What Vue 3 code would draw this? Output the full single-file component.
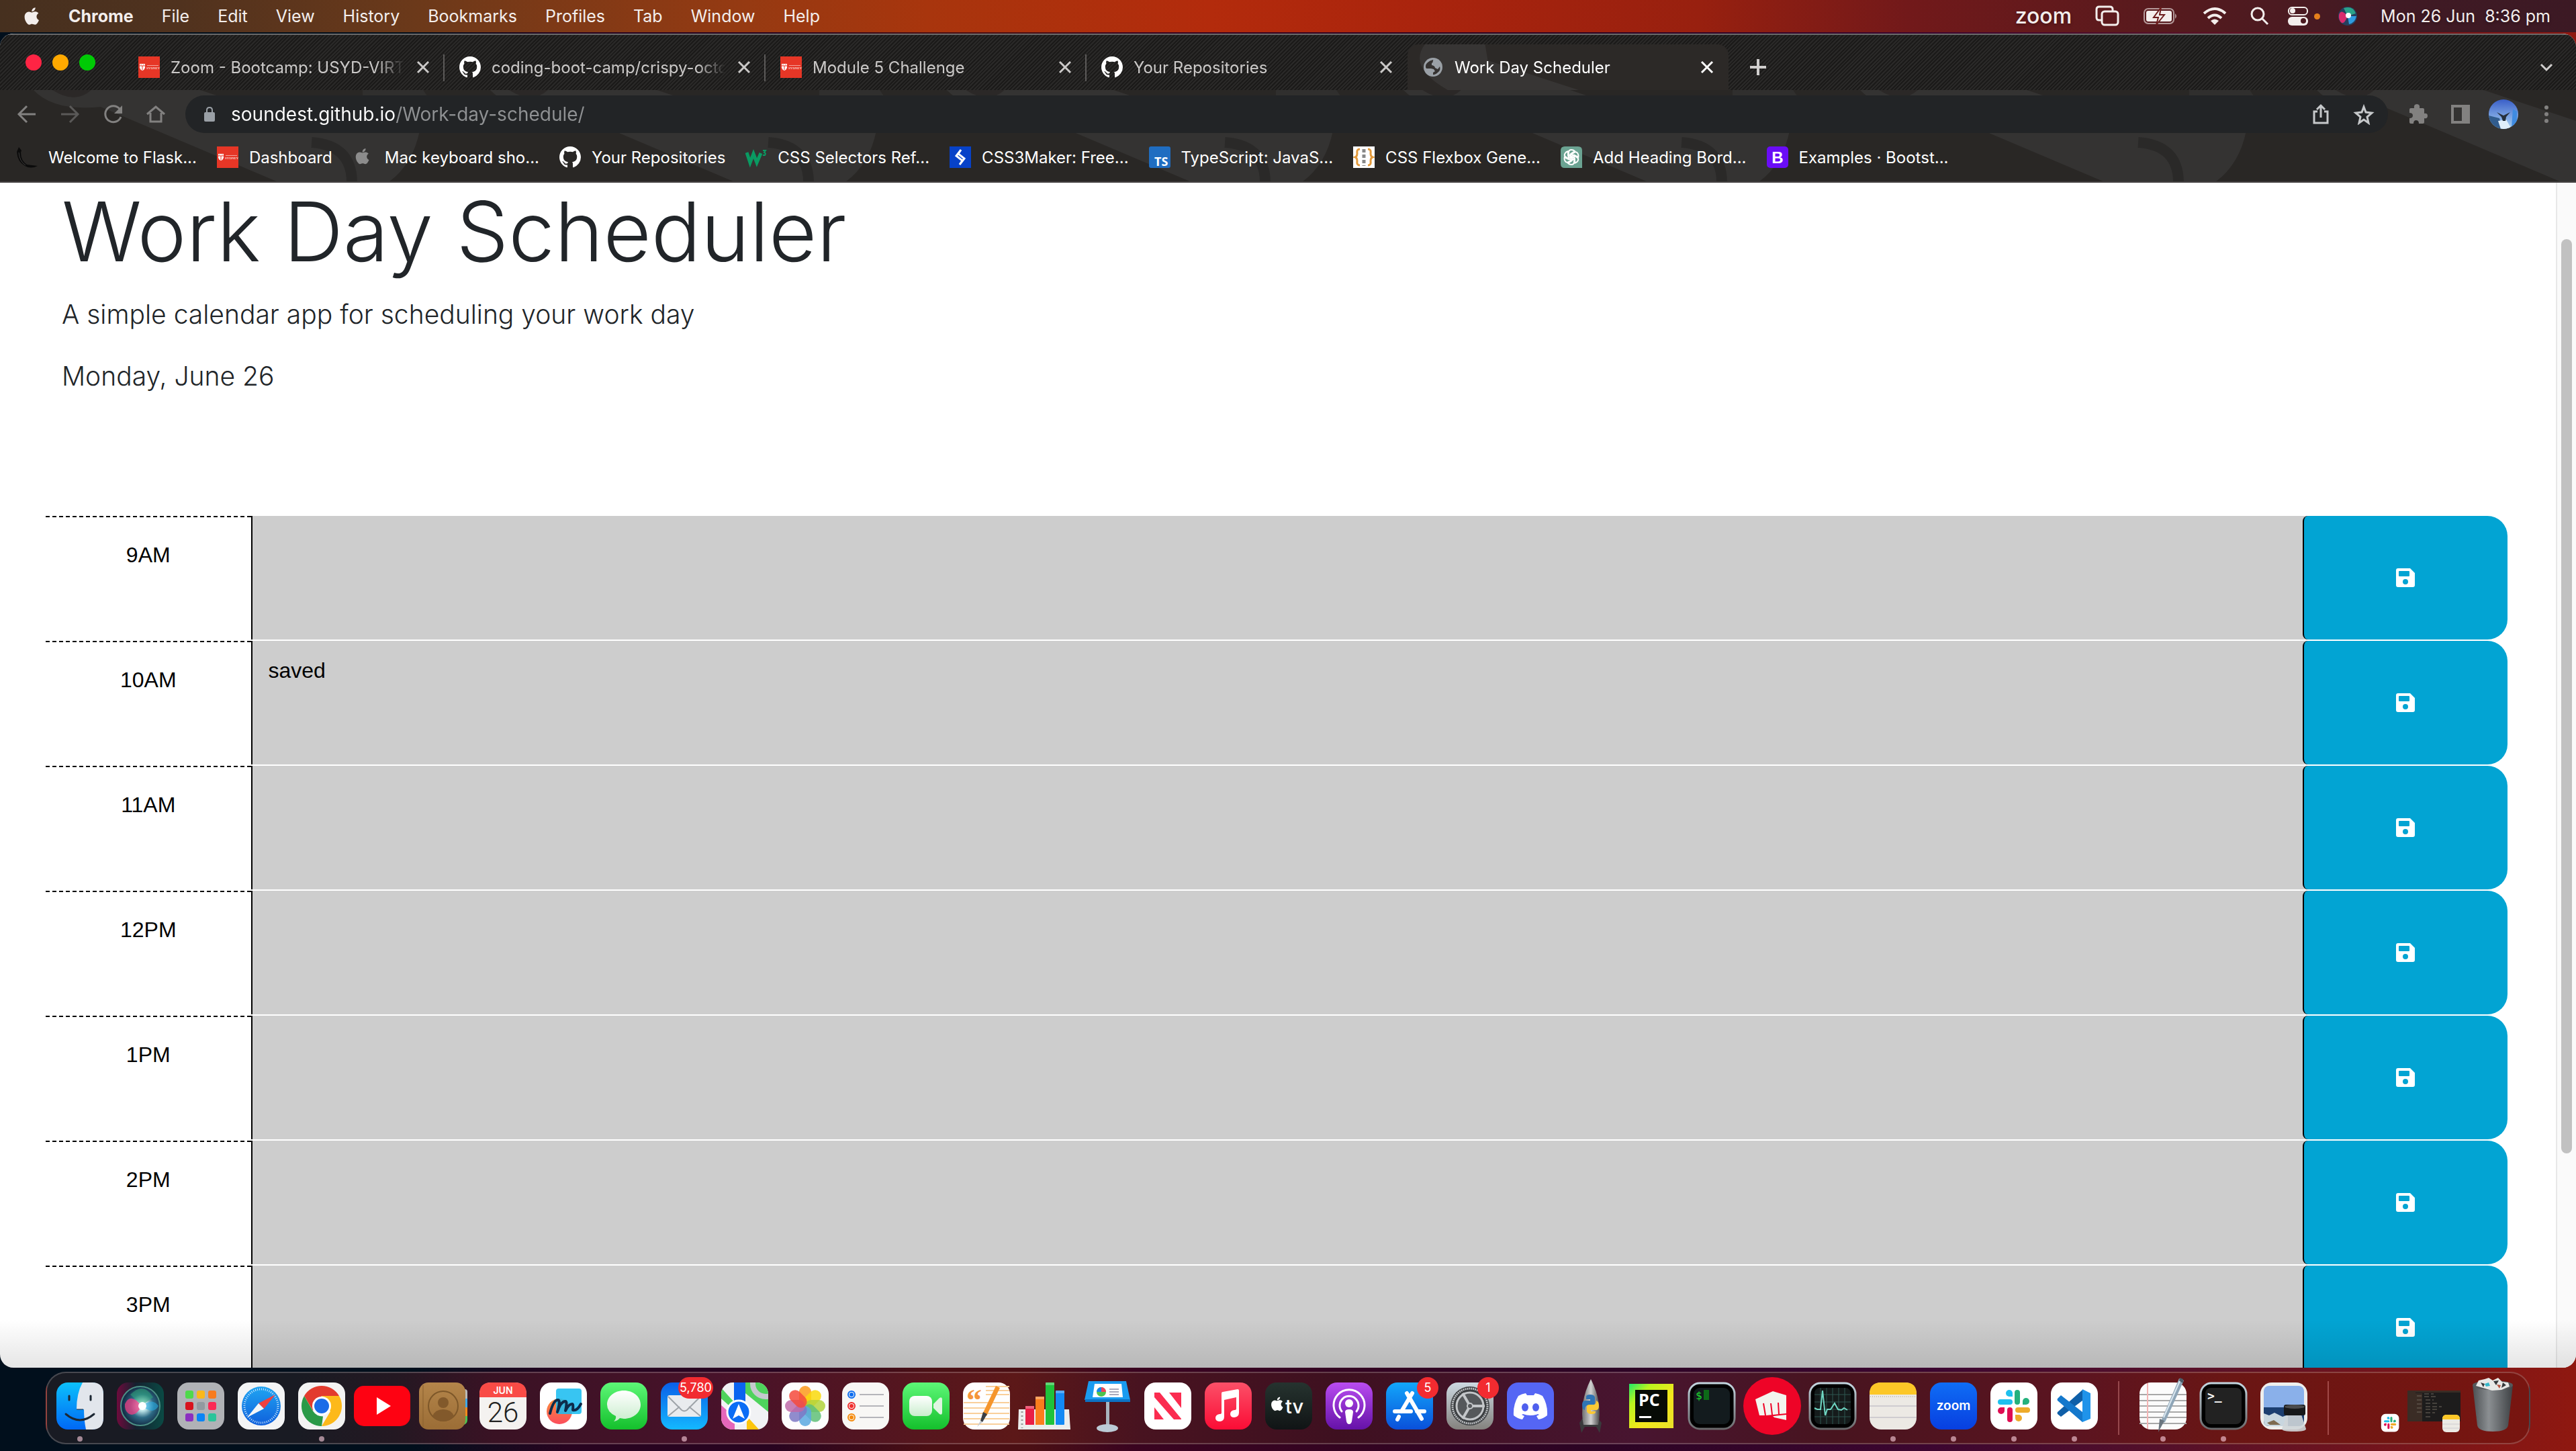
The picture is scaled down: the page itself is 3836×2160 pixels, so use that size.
<script setup>
import { ref } from 'vue'

const menus = ['File', 'Edit', 'View', 'History', 'Bookmarks', 'Profiles', 'Tab', 'Window', 'Help']

const github = '<path fill="#fff" transform="scale(2)" d="M8 0C3.58 0 0 3.58 0 8c0 3.54 2.29 6.53 5.47 7.59.4.07.55-.17.55-.38 0-.19-.01-.82-.01-1.49-2.01.37-2.53-.49-2.69-.94-.09-.23-.48-.94-.82-1.13-.28-.15-.68-.52-.01-.53.63-.01 1.08.58 1.23.82.72 1.21 1.87.87 2.33.66.07-.52.28-.87.51-1.07-1.78-.2-3.64-.89-3.64-3.95 0-.87.31-1.59.82-2.15-.08-.2-.36-1.02.08-2.12 0 0 .67-.21 2.2.82.64-.18 1.32-.27 2-.27s1.36.09 2 .27c1.53-1.04 2.2-.82 2.2-.82.44 1.1.16 1.92.08 2.12.51.56.82 1.27.82 2.15 0 3.07-1.87 3.75-3.65 3.95.29.25.54.73.54 1.48 0 1.07-.01 1.93-.01 2.2 0 .21.15.46.55.38A8.01 8.01 0 0 0 16 8c0-4.42-3.58-8-8-8z"/>'
const sydney = '<path fill="#e63626" d="M0 0h32v32H0z"/><path fill="#fff" d="M2 11h8v6q-1 3-4 4-3-1-4-4z"/><path stroke="#e63626" d="M2 14h8M6 14v6M4 12v1M8 12v1"/><path stroke="#f3a39b" d="M13 13.500h17"/><text x="12" y="19" font-family="Liberation Serif, serif" font-size="5" fill="#fff">SYDNEY</text>'
const apple = 'M17.050 20.280c-.98.95-2.050.8-3.080.35-1.090-.46-2.090-.48-3.240 0-1.440.62-2.200.44-3.060-.35C2.790 15.250 3.510 7.590 9.050 7.310c1.350.07 2.290.74 3.080.8 1.180-.24 2.310-.93 3.570-.84 1.510.12 2.650.72 3.400 1.800-3.120 1.870-2.380 5.980.48 7.130-.57 1.500-1.310 2.990-2.540 4.090zM12.030 7.250c-.15-2.230 1.660-4.070 3.740-4.250.29 2.580-2.340 4.500-3.740 4.250z'
const globe = '<circle cx="16" cy="16" r="14" fill="#9aa0a6"/><path fill="#353231" d="M8 9q3-3 8-4l1 3-3 2v3l4 1 1 3 4 2 3-4q2 5-3 9-4 4-7 3v-3l3-2-2-3-4-1H6q-3-5 2-9z"/><path fill="#9aa0a6" d="M16 6q6 0 9 6l-3 3h-4l-3-3z"/>'

const tabs = [
  { title: 'Zoom - Bootcamp: USYD-VIRT', icon: sydney },
  { title: 'coding-boot-camp/crispy-octo', icon: github },
  { title: 'Module 5 Challenge', icon: sydney },
  { title: 'Your Repositories', icon: github },
  { title: 'Work Day Scheduler', icon: globe, active: true },
]

const bookmarks = [
  { title: 'Welcome to Flask...', icon: '<path fill="#0b0b0b" d="M4 1l4 5-1 3q0 12 9 18l16 2q-10 5-19 0Q2 23 1 8z"/><path stroke="#3d3c3b" d="M4 9q1 13 10 19" fill="none"/>' },
  { title: 'Dashboard', icon: sydney },
  { title: 'Mac keyboard sho...', icon: `<path fill="#8c8c8c" transform="translate(-1 -1) scale(1.300)" d="${apple}"/>` },
  { title: 'Your Repositories', icon: github },
  { title: 'CSS Selectors Ref...', icon: '<path fill="none" stroke="#0a9a62" stroke-width="5" d="M2 9l5 15 5-13 5 13 6-14"/><path fill="none" stroke="#0a9a62" stroke-width="2" d="M26 6h4l-2 3q3 1 1 4l-3 0"/>' },
  { title: 'CSS3Maker: Free...', icon: '<path fill="#0742c8" d="M0 0h32v32H0z"/><path fill="none" stroke="#fff" stroke-width="3" d="M17 5l-7 9 9 7-4 6M15 27l7-9-9-7 4-6"/>' },
  { title: 'TypeScript: JavaS...', icon: '<rect width="32" height="32" rx="3" fill="#1f6dc1"/><text x="8" y="29" font-family="Open Sans, sans-serif" font-weight="700" font-size="18" fill="#fff">TS</text>' },
  { title: 'CSS Flexbox Gene...', icon: '<path fill="#fff" d="M0 0h32v32H0z"/><path fill="none" stroke="#e39a3c" stroke-width="3" d="M10 4Q5 4 6 10q0 5-3 6 3 1 3 6-1 6 4 6M22 4q5 0 4 6 0 5 3 6-3 1-3 6 1 6-4 6"/><path stroke="#888" stroke-width="5" stroke-dasharray="5 3" d="M16 4v25"/>' },
  { title: 'Add Heading Bord...', icon: '<path fill="#6ba392" d="M6 0h20q6 0 6 6v26H6q-6 0-6-6V6q0-6 6-6z"/><g fill="none" stroke="#fff" stroke-width="2"><path id="petal" d="M12 18V9q0-4 4-4 3 0 5 2l-6 4v6"/><use href="#petal" transform="rotate(60 16 16)"/><use href="#petal" transform="rotate(120 16 16)"/><use href="#petal" transform="rotate(180 16 16)"/><use href="#petal" transform="rotate(240 16 16)"/><use href="#petal" transform="rotate(300 16 16)"/></g>' },
  { title: 'Examples · Bootst...', icon: '<rect width="32" height="32" rx="5" fill="#6a0cf6"/><text x="16" y="25" text-anchor="middle" font-family="Liberation Sans, sans-serif" font-weight="700" font-size="24" fill="#fff">B</text>' },
]

const hours = ref([
  { label: '9AM', note: '' },
  { label: '10AM', note: 'saved' },
  { label: '11AM', note: '' },
  { label: '12PM', note: '' },
  { label: '1PM', note: '' },
  { label: '2PM', note: '' },
  { label: '3PM', note: '' },
])

const address = ref('soundest.github.io/Work-day-schedule/')

const grad = (id, from, to) => `<linearGradient id="${id}" x2="0" y2="1"><stop stop-color="${from}"/><stop offset="1" stop-color="${to}"/></linearGradient>`
const tile = (fill) => `<rect x="10" y="10" width="70" height="70" rx="17" fill="${fill}"/>`
const screenTile = '<rect x="11" y="11" width="68" height="68" rx="16" fill="#000" stroke="url(#steel)" stroke-width="3"/>'

const slackMark = '<g stroke-width="8" stroke-linecap="round"><path stroke="#25b17d" d="M50 25v14"/><path stroke="#1ec0ee" d="M25 39h14"/><path stroke="#df0d52" d="M39 51v14"/><path stroke="#eeab2a" d="M51 51h14"/></g><path fill="#1ec0ee" d="M43 31h-5a5 5 0 1 1 5-5z"/><path fill="#25b17d" d="M58 43v-5a5 5 0 1 1 5 5z"/><path fill="#df0d52" d="M31 47v5a5 5 0 1 1-5-5z"/><path fill="#eeab2a" d="M47 58h5a5 5 0 1 1-5 5z"/>'

const launchColors = ['#4fd94a', '#f9b81a', '#f77b1e', '#d8131d', '#929aa0', '#fb2b55', '#8b2fc0', '#0a84f5', '#2bc49a']
const launchpad = launchColors.map((c, i) => `<rect x="${22 + (i % 3) * 17}" y="${22 + Math.floor(i / 3) * 17}" width="12" height="12" rx="3" fill="${c}"/>`).join('')
const petalColors = ['#fb9a1c', '#f9d90c', '#b2d33c', '#5fbf78', '#5aa9e0', '#7d78c4', '#c06aa8', '#f44a3c']
const petals = petalColors.map((c, i) => `<rect x="36" y="15" width="18" height="30" rx="9" fill="${c}" opacity=".85" transform="rotate(${i * 45} 45 45)"/>`).join('')

const apps = [
  { name: 'Finder', running: true, art: grad('fin', '#0cc0fb', '#0068f5') + tile('url(#fin)') + '<path fill="#e2e6ec" d="M49 10h14q17 0 17 17v36q0 17-17 17h-9q-3-14-3-30H40q0-24 9-40z"/><path fill="none" stroke="#1c2733" stroke-width="3" stroke-linecap="round" d="M29 30v6M61 30v6M24 57q21 18 42 0"/><path fill="none" stroke="#1c2733" d="M40 50h10"/>' },
  { name: 'Siri', art: '<linearGradient id="sbg"><stop stop-color="#6d0b3c"/><stop offset=".4" stop-color="#15202f"/><stop offset="1" stop-color="#0a4a44"/></linearGradient><radialGradient id="orb" cx=".55" cy=".5"><stop stop-color="#fff"/><stop offset=".25" stop-color="#bfe6ea"/><stop offset=".6" stop-color="#2d6a85"/><stop offset="1" stop-color="#153049"/></radialGradient>' + tile('url(#sbg)') + '<circle cx="45" cy="45" r="29" fill="url(#orb)" stroke="#4c9086" stroke-width="2"/><path fill="#ef3c83" opacity=".75" d="M22 42q8-18 25 3-10 18-20 11-6-5-5-14z"/><path fill="#28a8e0" opacity=".6" d="M48 45q15-13 24 0-8 14-24 0z"/><path fill="#2fae77" opacity=".5" d="M30 28q20-20 34 4L47 44z"/><circle cx="48" cy="45" r="6" fill="#fff"/>' },
  { name: 'Launchpad', art: tile('#b0b2b6') + launchpad },
  { name: 'Safari', art: grad('saf', '#20a5f2', '#0f5fdc') + tile('#f3f4f5') + '<circle cx="45" cy="45" r="29" fill="url(#saf)"/><circle cx="45" cy="45" r="25" fill="none" stroke="#cfe7fb" stroke-width="3" stroke-dasharray="1 2"/><path fill="#f0413f" d="M66 28L49 49l-8-8z"/><path fill="#f4f6f8" d="M24 62l17-21 8 8z"/>' },
  { name: 'Google Chrome', running: true, art: tile('#f3f3f3') + '<path fill="#e33b2e" d="M45 30h26A30 30 0 0 0 19 30l13 22z"/><path fill="#2a9a48" d="M45 75A30 30 0 0 1 19 30l13 22.500q5 8 15 8z"/><path fill="#fdb91a" d="M45 30h26a30 30 0 0 1-26 45l13-22z"/><circle cx="45" cy="45" r="14" fill="#fff"/><circle cx="45" cy="45" r="11" fill="#1c6ce8"/>' },
  { name: 'YouTube', art: '<rect x="3" y="15" width="84" height="60" rx="15" fill="#fe0212"/><path fill="#fff" d="M37 32l21 13-21 13z"/>' },
  { name: 'Contacts', art: grad('con', '#b4854a', '#9b6d36') + '<rect x="70" y="20" width="12" height="18" rx="4" fill="#b9b9b9"/><path fill="#3fa9e8" d="M74 34h8v13h-8z"/><path fill="#f28a1d" d="M74 47h8v13h-8z"/><path fill="#4cc652" d="M74 60h8v6q0 6-8 8z"/><rect x="10" y="10" width="69" height="70" rx="14" fill="url(#con)"/><path stroke="#8a612f" d="M16 14v62"/><circle cx="46" cy="45" r="22" fill="none" stroke="#7d5729" stroke-width="2"/><circle cx="46" cy="40" r="8" fill="#82592b"/><path fill="#82592b" d="M30 60q4-10 16-10t16 10q-6 8-16 8t-16-8z"/>' },
  { name: 'Calendar', art: tile('#f4f2f0') + '<path fill="#f94b46" d="M10 32v-5q0-17 17-17h36q17 0 17 17v5z"/><text x="45" y="27" text-anchor="middle" font-family="Inter, sans-serif" font-weight="600" font-size="14" fill="#fff">JUN</text><text x="45" y="69" text-anchor="middle" font-family="Roboto, sans-serif" font-weight="300" font-size="42" fill="#222">26</text>' },
  { name: 'Freeform', art: grad('fre', '#fb8f3a', '#fb4d5c') + tile('#fff') + '<circle cx="39" cy="53" r="19" fill="url(#fre)"/><rect x="34" y="19" width="38" height="38" rx="4" fill="#1cbdf0" opacity=".88"/><path fill="none" stroke="#0d2b4a" stroke-width="4" stroke-linecap="round" stroke-linejoin="round" d="M25 56q5-20 12-20 4 0-1 18 5-16 12-16 3 0 0 14 5-10 10-10 2 0 1 9 6 2 12-9"/>' },
  { name: 'Messages', art: grad('grn', '#5df777', '#14c02c') + grad('bub', '#ffffff', '#c9edcd') + tile('url(#grn)') + '<path fill="url(#bub)" d="M45 22c14 0 25 9 25 21s-11 21-25 21l-6-1q-3 4-9 5 4-4 3-8-13-6-13-17c0-12 11-21 25-21z"/>' },
  { name: 'Mail', running: true, badge: '5,780', art: grad('mai', '#0a5fe8', '#14b8ff') + tile('url(#mai)') + '<rect x="20" y="29" width="50" height="32" rx="3" fill="#e9ebee"/><path fill="none" stroke="#9ea3a8" stroke-width="2" d="M21 31l20 20q4 3 8 0l20-20M21 60l17-14M69 60L52 46"/>' },
  { name: 'Maps', art: '<clipPath id="mapc"><rect x="10" y="10" width="70" height="70" rx="17"/></clipPath><g clip-path="url(#mapc)"><path fill="#f1f2f4" d="M0 0h90v90H0z"/><path fill="#4fd35c" d="M46 0h44v62L46 26zM10 18l18 20v12L10 34z"/><path fill="#e567ba" d="M8 42l22 20v20H8z"/><path fill="#fdc50c" d="M48 82V60l20 22z"/><path fill="#0a63f0" d="M29 8h17v34H29z"/><circle cx="76" cy="12" r="19" fill="none" stroke="#c6c9ce" stroke-width="8"/></g><circle cx="36" cy="54" r="17" fill="#0c6df5" stroke="#fff" stroke-width="3"/><path fill="#fff" d="M36 42l9 22-9-5-9 5z"/>' },
  { name: 'Photos', art: tile('#fdfdfd') + petals },
  { name: 'Reminders', art: tile('#f8f7f5') + '<path stroke="#b5b5ba" stroke-width="2" d="M36 28h36M36 45h36M36 62h36"/><g fill="none" stroke-width="2"><circle cx="24" cy="28" r="5" stroke="#0a6cf0"/><circle cx="24" cy="45" r="5" stroke="#f02c2c"/><circle cx="24" cy="62" r="5" stroke="#f58a0b"/></g><circle cx="24" cy="28" r="3" fill="#0a6cf0"/><circle cx="24" cy="45" r="3" fill="#f02c2c"/><circle cx="24" cy="62" r="3" fill="#f58a0b"/>' },
  { name: 'FaceTime', art: tile('url(#grn)') + '<rect x="20" y="30" width="34" height="30" rx="8" fill="url(#bub)"/><path fill="#dff5e1" d="M56 42l9-9q4-2 4 2v20q0 4-4 2l-9-9z"/>' },
  { name: 'Pages', art: tile('#fefefe') + '<path stroke="#f9cf9a" stroke-width="2" d="M44 16h35M44 22h35M44 28h35M11 40h68M11 48h68M11 56h68M11 64h68M11 72h68"/><text x="15" y="52" font-family="Liberation Serif, serif" font-weight="700" font-size="46" fill="#f5953a">“</text><path fill="#f5952b" d="M59 15l6 3-20 42-6-3z"/><path fill="#3c3f44" d="M40 54l6 3-7 12-3-2z"/><path fill="#c9ccd0" d="M36 67l3 2-8 7z"/>' },
  { name: 'Numbers', art: '<path fill="#eceded" d="M3 50h75l2 30H2z"/><path stroke="#999" stroke-width="3" stroke-dasharray="2 4" d="M8 53v25"/><rect x="13" y="45" width="13" height="28" fill="#e91e46"/><rect x="28" y="31" width="13" height="42" fill="#fb7d1d"/><rect x="43" y="10" width="13" height="63" rx="1" fill="#1fc23b"/><rect x="58" y="22" width="13" height="51" rx="1" fill="#1389f5"/><path fill="#fff" opacity=".3" d="M13 45h13v4H13zM28 31h13v4H28zM43 10h13v4H43zM58 22h13v4H58z"/>' },
  { name: 'Keynote', art: '<path fill="#a8b4be" d="M43 38h5v38h-5z"/><ellipse cx="45" cy="78" rx="16" ry="6" fill="#bccbd6"/><path fill="#1a9bf0" d="M17 8h56l6 28H11z"/><path fill="#0c72c4" d="M12 35h67v4H12z"/><path fill="#fff" d="M26 12h40l2 20H23z"/><circle cx="36" cy="24" r="7" fill="#4dc34f"/><path fill="#f0435a" d="M36 24v-7a7 7 0 0 1 7 7z"/><path fill="#1787f0" d="M36 24h-7a7 7 0 0 1 7-7z"/><path stroke="#aab" stroke-width="2" d="M48 20h14M48 24h14M48 28h14"/>' },
  { name: 'News', art: tile('#fff') + '<path fill="#fb2c50" d="M25 25h8l32 39v1H54L25 32zM47 25h18v23zM25 47v18h14z"/>' },
  { name: 'Music', art: grad('mus', '#fb5068', '#fb0c35') + tile('url(#mus)') + '<path fill="#fff" d="M35 26q0-2 2-2l22-4q2 0 2 2v33q0 6-7 7-6 0-6-5 0-5 6-6 3 0 3-2V32l-18 4v25q0 6-6 7-7 0-7-5t6-6q3 0 3-2z"/>' },
  { name: 'Apple TV', art: grad('atv', '#26332f', '#101415') + tile('url(#atv)') + `<path fill="#fff" transform="translate(14 28) scale(1.150)" d="${apple}"/><text x="40" y="56" font-family="Inter, sans-serif" font-weight="500" font-size="29" fill="#fff">tv</text>` },
  { name: 'Podcasts', art: grad('pod', '#b94cf0', '#6512a8') + tile('url(#pod)') + '<g fill="none" stroke="#fff" stroke-width="3" stroke-linecap="round"><path d="M31 62a23 23 0 1 1 28 0"/><path d="M34 53a14 14 0 1 1 22 0"/></g><circle cx="45" cy="41" r="6" fill="#fff"/><path fill="#fff" d="M39 54q0-4 6-4t6 4l-2 14q-1 4-4 4t-4-4z"/>' },
  { name: 'App Store', badge: '5', art: grad('aps', '#12a6fa', '#0a50da') + tile('url(#aps)') + '<path stroke="#fff" stroke-width="6" stroke-linecap="round" d="M49 26L33 53M41 26l22 38M23 53h24M56 53h11M29 61l-2 4"/>' },
  { name: 'System Settings', badge: '1', art: grad('set', '#cdd9e2', '#84827e') + tile('url(#set)') + '<circle cx="45" cy="45" r="29" fill="#3c3f42"/><circle cx="45" cy="45" r="26" fill="none" stroke="#b9bcbf" stroke-width="3" stroke-dasharray="2 1"/><circle cx="45" cy="45" r="20" fill="#55585b" stroke="#c3c6c9" stroke-width="3"/><path stroke="#c3c6c9" stroke-width="4" d="M45 45h22M45 45L34 26M45 45L34 64"/><circle cx="45" cy="45" r="4" fill="#55585b" stroke="#c3c6c9" stroke-width="2"/>' },
  { name: 'Discord', art: tile('#5566f4') + '<path fill="#fff" d="M38 26l2 3h10l2-3q6 1 11 4 8 13 7 29-6 5-13 6l-3-5 4-2-2-1q-11 4-22 0l-2 1 4 2-3 5q-7-1-13-6-1-16 7-29 5-3 11-4z"/><ellipse cx="37" cy="47" rx="5" ry="6" fill="#5060ee"/><ellipse cx="53" cy="47" rx="5" ry="6" fill="#5060ee"/>' },
  { name: 'Python Launcher', art: '<linearGradient id="rkt"><stop stop-color="#6e6e6e"/><stop offset=".5" stop-color="#d2d2d2"/><stop offset="1" stop-color="#4a4a4a"/></linearGradient><path fill="#3a3a3c" d="M32 64l-4 6 3 15 5-9h17l5 9 3-15-5-6z"/><path fill="url(#rkt)" d="M45 5q18 36 11 68H34Q27 41 45 5z"/><path fill="#2f74b5" d="M38 31q0-3 6-3t7 4v9q0 3-4 3h-7q-4 1-4 7-4-1-4-8t6-6h6v-2h-6z"/><path fill="#fbc935" d="M52 54q0 3-6 3t-7-4v-7q0-3 4-3h6q4 0 4-6 4 1 4 8t-6 6h-6v2h7z"/>' },
  { name: 'PyCharm', art: '<linearGradient id="pyc" y2="1"><stop stop-color="#1fe86a"/><stop offset=".25" stop-color="#b9f51e"/><stop offset=".6" stop-color="#f3e61c"/><stop offset="1" stop-color="#e8e12a"/></linearGradient><rect x="12" y="12" width="66" height="66" fill="url(#pyc)"/><rect x="21" y="21" width="48" height="48" fill="#070b06"/><text x="26" y="45" font-family="Open Sans, sans-serif" font-weight="700" font-size="25" fill="#fff">PC</text><path fill="#fff" d="M27 60h18v3H27z"/>' },
  { name: 'iTerm', art: grad('steel', '#c3d5df', '#6a6a6c') + screenTile + '<rect x="18" y="18" width="54" height="54" rx="9" fill="#131b1e"/><text x="21" y="35" font-family="DejaVu Sans Mono, monospace" font-size="16" fill="#1fdc2e">$</text><path fill="#0d6a18" d="M33 21h8v15h-8z"/>' },
  { name: 'Bloons', art: '<circle cx="45" cy="45" r="43" fill="#ee0427"/><path fill="#f3f4ee" d="M20 35l26-12 20 6v28l-4 2H26zM46 60l20-4v10l-18-4z"/><path stroke="#ee0427" stroke-width="2" d="M32 41l3 18M43 41l2 17M54 40l1 17"/><path stroke="#ee0427" stroke-width="2" d="M26 61l40-4"/>' },
  { name: 'Activity Monitor', art: screenTile + '<rect x="18" y="18" width="54" height="54" rx="8" fill="#151b1b"/><path stroke="#2f5751" d="M18 28h54M18 39h54M18 50h54M18 61h54M27 18v54M36 18v54M45 18v54M54 18v54M63 18v54"/><path fill="none" stroke="#6fd6c2" stroke-width="2" d="M18 48l4 2h5l3-28 4 37 3-9h5l6-9 5 9 5 1 4-3 5 3"/>' },
  { name: 'Notes', running: true, art: tile('#ece9e4') + '<path fill="#fcc727" d="M10 28v-1q0-17 17-17h36q17 0 17 17v1z"/><path stroke="#a39c8c" stroke-dasharray="1 2" d="M11 31h68"/><path stroke="#cfccd0" stroke-width="2" d="M10 45h70M10 62h70"/>' },
  { name: 'Zoom', running: true, art: grad('zm', '#0f6df5', '#083fe0') + tile('url(#zm)') + '<text x="45" y="51" text-anchor="middle" font-family="Inter, sans-serif" font-weight="600" font-size="19" fill="#fff">zoom</text>' },
  { name: 'Slack', running: true, art: tile('#fff') + slackMark },
  { name: 'Visual Studio Code', running: true, art: tile('#fff') + '<path fill="#0f5fa8" d="M57 21v16L25 61l-5-4q-1-2 0-3z"/><path fill="#1478cc" d="M20 34l5-5 32 25v15L20 37q-1-1 0-3z"/><path fill="#1f93ea" d="M57 20l12 6v38l-12 5z"/>' },
]

const utilities = [
  { name: 'TextEdit', running: true, art: tile('#fbfbfb') + '<path stroke="#a8a8a8" stroke-width="2" d="M10 28h70M10 37h70M10 45h70M10 54h70M10 62h70M10 71h70"/><path stroke="#f3b3b3" stroke-width="2" d="M22 11v68"/><path fill="#8fa6b8" d="M69 4l7 3-28 62-8 3z"/><path fill="#4b5a66" d="M70 3l5 2 0 6-6-3z"/><path fill="#6b7680" d="M40 64l7 3-9 17z"/><path stroke="#d9e6ef" stroke-width="2" d="M70 8L46 62"/>' },
  { name: 'Terminal', running: true, art: screenTile + '<rect x="18" y="18" width="54" height="54" rx="8" fill="#222"/><text x="21" y="36" font-family="DejaVu Sans Mono, monospace" font-weight="700" font-size="18" fill="#fff">&gt;_</text>' },
  { name: 'Preview', art: tile('#efeeec') + '<rect x="15" y="15" width="60" height="60" rx="8" fill="#8ab0ea"/><path fill="#1c3e70" d="M15 47h60v20q0 8-8 8H23q-8 0-8-8z"/><path fill="#c8d6df" d="M15 56l8 3 8-4 12 6 8-3v17H23q-8 0-8-8z"/><path fill="#7e6b50" d="M20 70l10-4 10 7H24z"/><path fill="#cfd5d8" opacity=".9" d="M49 58h22l7 21q0 4-18 4t-18-4z"/><rect x="45" y="43" width="32" height="16" rx="3" fill="#17181a"/><ellipse cx="61" cy="46" rx="15" ry="3" fill="#4a4b4d"/>' },
]
</script>

<template>
  <div class="desktop">
    <header class="menubar">
      <nav class="menus" aria-label="Menu bar">
        <button class="apple" aria-label="Apple menu">
          <svg viewBox="4 2 17 20" width="24" height="32"><path fill="currentColor" :d="apple" /></svg>
        </button>
        <button class="current">Chrome</button>
        <button v-for="item in menus" :key="item">{{ item }}</button>
      </nav>
      <div class="status">
        <span class="zoom-mark">zoom</span>
        <svg width="36" height="32" viewBox="0 0 36 32" fill="none" stroke="currentColor" stroke-width="3"><path d="M10 22H6q-4 0-4-4V6q0-4 4-4h16q4 0 4 4v2" /><rect x="10" y="9" width="24" height="20" rx="4" /></svg>
        <svg width="54" height="32" viewBox="0 0 54 32"><rect x="2" y="5" width="44" height="22" rx="6" fill="none" stroke="currentColor" stroke-width="2" opacity=".6" /><rect x="5" y="8" width="38" height="16" rx="3" fill="currentColor" /><path fill="currentColor" opacity=".6" d="M48 12q4 4 0 8z" /><path fill="currentColor" stroke="#6c1c1c" stroke-width="2" d="M27 3L16 18h7l-3 11 12-15h-7z" /></svg>
        <svg width="36" height="28" viewBox="0 0 36 28" fill="none" stroke="currentColor" stroke-width="4"><path d="M2 10q16-14 32 0M8 17q10-9 20 0" /><path fill="currentColor" stroke="none" d="M12 21q6-5 12 0l-6 6z" /></svg>
        <svg width="28" height="28" viewBox="0 0 28 28" fill="none" stroke="currentColor" stroke-width="3"><circle cx="11" cy="11" r="9" /><path d="M18 18l8 8" /></svg>
        <span class="control-centre">
          <svg width="32" height="30" viewBox="0 0 32 30"><rect x="2" y="2" width="28" height="11" rx="5" fill="none" stroke="currentColor" stroke-width="2" /><circle cx="8" cy="7" r="4" fill="currentColor" /><rect x="1" y="16" width="30" height="13" rx="6" fill="currentColor" /><circle cx="24" cy="22" r="4" fill="#4a191f" /></svg>
          <i class="mic-dot"></i>
        </span>
        <svg width="28" height="28" viewBox="0 0 28 28"><circle cx="14" cy="14" r="14" fill="#25405e" /><path fill="#d82c6d" d="M1 12q3-10 13 2-5 12-9 10-5-4-4-12z" /><path fill="#2ba38a" d="M8 2q14-4 18 8l-12 4z" /><path fill="#2f9be0" d="M14 14h13q-2 10-11 12z" /><circle cx="15" cy="13" r="4" fill="#fff" /></svg>
        <time>Mon 26 Jun&nbsp; 8:36 pm</time>
      </div>
    </header>

    <main class="window">
      <div class="chrome">
        <svg class="theme" aria-hidden="true">
          <defs>
            <pattern id="theme" width="680" height="204" patternUnits="userSpaceOnUse">
              <path fill="#292725" d="M0 0h680v204H0z" />
              <path fill="#343332" d="M50 68h248l180 60h147q-10 50-45 76H412L150 93Q80 100 50 68z" />
              <path fill="#2b2827" d="M78 68h58q-24 22-58 0z" />
              <path fill="none" stroke="#2a2928" stroke-width="16" d="M464 146q60 4 60 60" />
              <path fill="#302f2e" d="M540 68h90l20 30-30 34h-80z" />
            </pattern>
          </defs>
          <rect width="100%" height="100%" fill="url(#theme)" />
        </svg>

        <div class="tabstrip">
          <div class="lights">
            <button class="light close" aria-label="Close window"></button>
            <button class="light minimise" aria-label="Minimise window"></button>
            <button class="light full" aria-label="Full screen"></button>
          </div>
          <div class="tabs">
            <div v-for="tab in tabs" :key="tab.title" class="tab" :class="{ active: tab.active }">
              <svg v-if="tab.active" class="tab-theme" viewBox="0 0 480 68" preserveAspectRatio="none" aria-hidden="true"><path fill="#373534" d="M26 0h90l4 24 136 44H60Q0 34 26 0z" /></svg>
              <svg class="favicon" viewBox="0 0 32 32" v-html="tab.icon"></svg>
              <span class="tab-title">{{ tab.title }}</span>
              <button class="tab-close" :aria-label="'Close ' + tab.title">
                <svg viewBox="0 0 24 24" width="24" height="24"><path stroke="currentColor" stroke-width="3" d="M4 4l16 16M20 4L4 20" /></svg>
              </button>
            </div>
          </div>
          <button class="strip-button" aria-label="New tab"><svg viewBox="0 0 28 28" width="28" height="28"><path stroke="currentColor" stroke-width="4" d="M14 2v24M2 14h24" /></svg></button>
          <button class="strip-button last" aria-label="Search tabs"><svg viewBox="0 0 28 28" width="28" height="28"><path fill="none" stroke="currentColor" stroke-width="3" d="M6 10l8 8 8-8" /></svg></button>
        </div>

        <div class="toolbar">
          <div class="nav">
            <button aria-label="Back"><svg viewBox="0 0 32 32"><path d="M29 16H5M16 4L4 16l12 12" /></svg></button>
            <button aria-label="Forward" class="dim"><svg viewBox="0 0 32 32"><path d="M3 16h24M16 4l12 12-12 12" /></svg></button>
            <button aria-label="Reload"><svg viewBox="0 0 32 32"><path d="M26 8a12 12 0 1 0 2 12" /><path fill="currentColor" stroke="none" d="M30 3v12H18z" /></svg></button>
            <button aria-label="Home"><svg viewBox="0 0 32 32"><path d="M3 16L16 5l13 11M8 14v13h16V14" /></svg></button>
          </div>
          <div class="omnibox">
            <svg width="24" height="28" viewBox="0 0 24 28"><rect x="4" y="11" width="16" height="14" rx="2" fill="#9aa0a6" /><path fill="none" stroke="#9aa0a6" stroke-width="2" d="M8 12V8q0-4 4-4t4 4v4" /></svg>
            <input v-model="address" type="text" aria-label="Address and search bar" />
            <button aria-label="Share"><svg viewBox="0 0 32 32"><path d="M11 12H6v17h20V12h-5M16 21V4M10 9l6-6 6 6" /></svg></button>
            <button aria-label="Bookmark this tab"><svg viewBox="0 0 32 32"><path d="M16 5l3 8 9 1-7 6 2 9-7-5-7 5 2-9-7-6 9-1z" /></svg></button>
          </div>
          <div class="nav extras">
            <button aria-label="Extensions"><svg viewBox="0 0 32 32"><path fill="currentColor" stroke="none" d="M4 9q0-2 2-2h5q-1-6 4-6t4 6h5q2 0 2 2v6q5-1 5 3.500t-5 3.500v6q0 2-2 2h-6q0-5-4-5t-4 5H6q-2 0-2-2v-6q5 0 5-4t-5-4z" /></svg></button>
            <button aria-label="Side panel"><svg viewBox="0 0 32 32"><path fill="currentColor" stroke="none" fill-rule="evenodd" d="M2 2h28v28H2zM6 6v20h12V6z" /></svg></button>
            <button aria-label="Profile" class="avatar"><svg viewBox="0 0 44 44"><defs><linearGradient id="sky" x2="0" y2="1"><stop stop-color="#3a5fc8" /><stop offset="1" stop-color="#a8d4f5" /></linearGradient><clipPath id="round"><circle cx="22" cy="22" r="22" /></clipPath></defs><g clip-path="url(#round)" stroke="none"><path fill="url(#sky)" d="M0 0h44v44H0z" /><path fill="#315c8d" d="M0 24l16 4 4 16H0z" /><path fill="#dfeefa" d="M14 32l12-2 8 14H18z" /><path fill="#3f8be0" d="M36 14l6 4v24h-8z" /><path fill="#26303c" d="M12 19l10 5 10-5-6 7-1 6h-4l-2-6z" /></g></svg></button>
            <button aria-label="Menu"><svg viewBox="0 0 32 32"><g fill="currentColor" stroke="none"><circle cx="16" cy="6" r="3" /><circle cx="16" cy="16" r="3" /><circle cx="16" cy="26" r="3" /></g></svg></button>
          </div>
        </div>

        <nav class="bookmarks" aria-label="Bookmarks">
          <a v-for="mark in bookmarks" :key="mark.title" href="#">
            <svg class="favicon" viewBox="0 0 32 32" v-html="mark.icon"></svg>{{ mark.title }}
          </a>
        </nav>
      </div>

      <div class="viewport">
        <section class="page">
          <header class="jumbotron">
            <h1>Work Day Scheduler</h1>
            <p>A simple calendar app for scheduling your work day</p>
            <p>Monday, June 26</p>
          </header>
          <form class="schedule" @submit.prevent>
            <div v-for="(hour, i) in hours" :key="hour.label" class="block">
              <label class="hour" :for="'hour-' + i">{{ hour.label }}</label>
              <textarea :id="'hour-' + i" v-model="hour.note"></textarea>
              <button class="save" :aria-label="'Save ' + hour.label">
                <svg viewBox="0 0 28 28" width="28" height="28"><path fill="currentColor" fill-rule="evenodd" d="M3 0h18l7 7v18q0 3-3 3H3q-3 0-3-3V3q0-3 3-3zM5 4q-1 0-1 1v6q0 1 1 1h14q1 0 1-1V5q0-1-1-1zM14 16a4 4 0 1 0 0 8 4 4 0 0 0 0-8z" /></svg>
              </button>
            </div>
          </form>
        </section>
        <div class="scrollbar"><div class="thumb"></div></div>
      </div>
    </main>

    <footer class="dock">
      <button v-for="app in apps" :key="app.name" class="app" :aria-label="app.name">
        <svg viewBox="0 0 90 90" v-html="app.art"></svg>
        <i v-if="app.running" class="running"></i>
        <span v-if="app.badge" class="badge" :class="{ wide: app.badge.length > 1 }">{{ app.badge }}</span>
      </button>
      <hr />
      <button v-for="app in utilities" :key="app.name" class="app" :aria-label="app.name">
        <svg viewBox="0 0 90 90" v-html="app.art"></svg>
        <i v-if="app.running" class="running"></i>
      </button>
      <hr />
      <button class="app minimised" aria-label="Minimised windows">
        <svg viewBox="0 0 144 90">
          <g transform="translate(19 53) scale(.38)"><rect x="10" y="10" width="70" height="70" rx="17" fill="#fff" /><g v-html="slackMark"></g></g>
          <path fill="#1d1c1c" d="M62 22h79v46H62z" />
          <path fill="#3a2c25" d="M62 22h12v46H62zM74 26h10v42H74zM62 22h79v3H62z" />
          <path stroke="#71695f" stroke-dasharray="7 3" d="M76 30h7M76 36h7M76 42h7M76 48h7M76 54h7M87 27h14M87 31h18M89 36h12M89 41h20M89 46h24M89 50h20M89 55h14M89 61h10" />
          <rect x="114" y="58" width="26" height="26" rx="6" fill="#eceae5" />
          <path fill="#fcc727" d="M114 65v-1q0-6 6-6h14q6 0 6 6v1z" />
          <path stroke="#cfccd0" d="M114 72h26M114 78h26" />
        </svg>
      </button>
      <button class="app" aria-label="Bin">
        <svg viewBox="0 0 90 90">
          <defs><linearGradient id="bin"><stop stop-color="#4b4f52" /><stop offset=".4" stop-color="#8b8f92" /><stop offset="1" stop-color="#3e4144" /></linearGradient></defs>
          <path fill="url(#bin)" d="M15 14h60l-7 60q-2 9-23 9t-23-9z" />
          <ellipse cx="45" cy="14" rx="30" ry="7" fill="#55595c" />
          <path fill="#e8e8e6" d="M20 15l4-8 9-2 6-2 6 4 8-4 6 6 9 1 2 6-12 5-14 1z" />
          <path fill="#35383b" d="M27 10l6 2-2 5zM46 8l4 6 4-7zM60 10l5 4-7 4z" />
          <path fill="#35b7c9" d="M33 12l6-2 2 5-6 1z" /><path fill="#b5503c" d="M51 13l6 1-2 5z" />
        </svg>
      </button>
    </footer>
  </div>
</template>

<style>
body {
  margin: 0;
  background: #000;
}
</style>

<style scoped>
.desktop {
  display: flex;
  flex-direction: column;
  height: 100vh;
  overflow: hidden;
  font-family: Inter, "Noto Sans", sans-serif;
  background: linear-gradient(90deg, #010f1c 0 16%, #280420 22% 30%, #4a0f14 36% 40%, #3a0420 44%, #2c0424 62%, #3c0630 75%, #54102a 84%, #8f1810);
}

button {
  padding: 0;
  border: 0;
  background: none;
  color: inherit;
  font: inherit;
}

svg {
  display: block;
  flex: none;
}

/* Menu bar */
.menubar {
  display: flex;
  justify-content: space-between;
  align-items: center;
  flex: none;
  height: 48px;
  margin-bottom: 2px;
  padding: 0 38px 0 36px;
  background: linear-gradient(90deg, #46301f 0, #50321e 7%, #6b391a 16%, #963a12 29%, #a8350d 36%, #b32b0c 47%, #aa240d 55%, #98200f 66%, #72191a 74%, #541a1e 85%, #401a24 93%, #3c1924);
  color: #f3eeec;
  font-size: 25px;
  text-shadow: 0 2px 4px rgba(0, 0, 0, 0.3);
}

.menus,
.status {
  display: flex;
  align-items: center;
}

.menus {
  gap: 42px;
}

.current {
  font-weight: 700;
}

.status {
  gap: 35px;
}

.zoom-mark {
  font-size: 32px;
  line-height: 40px;
  font-weight: 500;
}

.control-centre {
  display: flex;
  align-items: center;
  gap: 8px;
  margin: 0 -8px;
}

.mic-dot {
  width: 9px;
  height: 9px;
  border-radius: 50%;
  background: #e5801c;
}

/* Browser window */
.window {
  display: flex;
  flex: 1;
  flex-direction: column;
  min-height: 0;
  overflow: hidden;
  border-radius: 20px;
  background: #fff;
}

.chrome {
  position: relative;
  flex: none;
  border-bottom: 2px solid #454242;
  color: #fff;
}

.theme {
  position: absolute;
  top: 16px;
  left: 0;
  width: 100%;
  height: 204px;
}

.tabstrip,
.toolbar,
.bookmarks {
  position: relative;
}

.tabstrip {
  display: flex;
  align-items: flex-end;
  height: 82px;
  border-top: 2px solid #6a6969;
  background: repeating-linear-gradient(135deg, #1b1a19 0 2px, #2a2928 2px 4px);
  font-size: 24px;
}

.lights {
  display: flex;
  align-self: center;
  gap: 16px;
  padding: 0 42px 0 38px;
}

.light {
  width: 24px;
  height: 24px;
  border-radius: 50%;
}

.close {
  background: #ff2444;
}

.minimise {
  background: #ffa900;
}

.full {
  background: #00ca05;
}

.tabs {
  display: flex;
}

.tab {
  position: relative;
  display: flex;
  align-items: center;
  gap: 16px;
  box-sizing: border-box;
  width: 478px;
  height: 68px;
  padding: 0 20px 0 22px;
  color: #cbc9c8;
}

.tab:not(.active)::after {
  position: absolute;
  top: 15px;
  right: 0;
  width: 2px;
  height: 40px;
  background: #5c5a59;
  content: "";
}

.tab:nth-child(4)::after {
  display: none;
}

.active {
  border-radius: 16px 16px 0 0;
  background: #2c2927;
  color: #fff;
}

.tab-theme {
  position: absolute;
  inset: 0;
  width: 100%;
  height: 100%;
}

.favicon {
  position: relative;
  width: 32px;
  height: 32px;
}

.tab-title {
  position: relative;
  flex: 1;
  overflow: hidden;
  white-space: nowrap;
  mask-image: linear-gradient(90deg, #000 88%, transparent);
}

.tab-close {
  position: relative;
}

.strip-button {
  display: flex;
  align-items: center;
  height: 68px;
  margin-left: 30px;
  color: #d0cecd;
}

.last {
  margin-right: 30px;
  margin-left: auto;
}

.toolbar {
  display: flex;
  align-items: center;
  gap: 28px;
  height: 72px;
  padding: 0 28px 0 24px;
}

.nav {
  display: flex;
  align-items: center;
  gap: 32px;
  color: #828180;
}

.nav svg,
.omnibox button svg {
  width: 32px;
  height: 32px;
  fill: none;
  stroke: currentColor;
  stroke-width: 3px;
}

.dim {
  color: #5a5958;
}

.avatar {
  margin: 0 -6px;
}

.nav .avatar svg {
  width: 44px;
  height: 44px;
}

.omnibox {
  display: flex;
  flex: 1;
  align-items: center;
  gap: 32px;
  height: 56px;
  padding: 0 20px 0 24px;
  border-radius: 28px;
  background: #222426;
  color: #c6c8ca;
}

.omnibox input {
  flex: 1;
  min-width: 0;
  margin-left: -12px;
  padding: 0;
  border: 0;
  outline: 0;
  background: linear-gradient(90deg, #fff 246px, #8f9193 246px);
  background-clip: text;
  color: transparent;
  font: 28px/40px Inter, "Noto Sans", sans-serif;
}

.bookmarks {
  display: flex;
  align-items: center;
  gap: 30px;
  height: 56px;
  padding: 0 24px 8px;
  font-size: 24px;
}

.bookmarks a {
  display: flex;
  align-items: center;
  gap: 16px;
  color: #fff;
  text-decoration: none;
  white-space: nowrap;
}

/* Page */
.viewport {
  position: relative;
  display: flex;
  flex: 1;
  min-height: 0;
  overflow: hidden;
}

.viewport::after {
  position: absolute;
  right: 0;
  bottom: 0;
  left: 0;
  height: 72px;
  background: linear-gradient(rgba(0, 0, 0, 0), rgba(0, 0, 0, 0.1));
  content: "";
  pointer-events: none;
}

.page {
  flex: 1;
  color: #212529;
  font-family: "Liberation Sans", Arial, sans-serif;
}

.jumbotron {
  padding: 0 92px 146px;
  font-family: Inter, "Liberation Sans", sans-serif;
  font-weight: 300;
}

h1 {
  margin: 0 0 20px;
  font-size: 123px;
  line-height: 146px;
  font-weight: 300;
}

p {
  margin: 0 0 32px;
  font-size: 39px;
  line-height: 60px;
}

.schedule {
  padding: 0 72px 0 68px;
}

.block {
  display: grid;
  grid-template-columns: 1fr 10fr 1fr;
  height: 184px;
  margin-bottom: 2px;
  background: linear-gradient(90deg, transparent 80%, #cdcdcd 80% 92%, transparent 92%);
}

.hour {
  padding-top: 32px;
  border-top: 2px dashed #000;
  color: #000;
  font-size: 32px;
  line-height: 48px;
  text-align: center;
}

textarea {
  box-sizing: border-box;
  width: 100%;
  height: 100%;
  padding: 20px 24px;
  border: 0;
  border-left: 2px solid #000;
  outline: 0;
  background: #cdcdcd;
  color: #000;
  font: 32px/48px "Liberation Sans", Arial, sans-serif;
  resize: none;
}

.save {
  display: grid;
  place-items: center;
  border-left: 2px solid #000;
  border-radius: 8px 30px 30px 8px;
  background: #02a4d3;
  color: #fff;
}

.scrollbar {
  box-sizing: border-box;
  width: 30px;
  padding: 84px 6px 0;
  border-left: 2px solid #e8e8e8;
  background: #fafafa;
}

.thumb {
  height: 81%;
  border-radius: 8px;
  background: #c1c1c1;
}

/* Dock */
.dock {
  display: flex;
  flex: none;
  box-sizing: border-box;
  height: 108px;
  margin: 6px 68px 10px;
  padding: 0 9px 0 4px;
  border: 2px solid rgba(255, 255, 255, 0.2);
  border-radius: 30px;
  background: linear-gradient(90deg, #191b23 0 10%, #241822 14%, #3a1224 18%, #48122a 27%, #5c1818 39%, #481320 44%, #3e1020 52%, #481530 64%, #48141f 72%, #5c1420 82%, #6a1614 88%, #781510);
}

.app {
  position: relative;
  display: flex;
  flex: none;
  align-items: flex-start;
  width: 90px;
  padding-top: 4px;
}

.app svg {
  width: 90px;
  height: 90px;
}

.minimised {
  width: 144px;
  margin-left: auto;
}

.app.minimised svg {
  width: 144px;
}

.running {
  position: absolute;
  bottom: 2px;
  left: 41px;
  width: 8px;
  height: 8px;
  border-radius: 50%;
  background: rgba(255, 210, 225, 0.6);
}

.badge {
  position: absolute;
  top: 6px;
  right: 2px;
  min-width: 32px;
  border-radius: 16px;
  background: #f22b30;
  color: #fff;
  font-size: 18px;
  line-height: 32px;
  text-align: center;
}

.wide {
  width: 52px;
}

hr {
  flex: none;
  width: 2px;
  height: 80px;
  margin: 12px 20px 0;
  border: 0;
  background: rgba(255, 170, 170, 0.35);
}
</style>
